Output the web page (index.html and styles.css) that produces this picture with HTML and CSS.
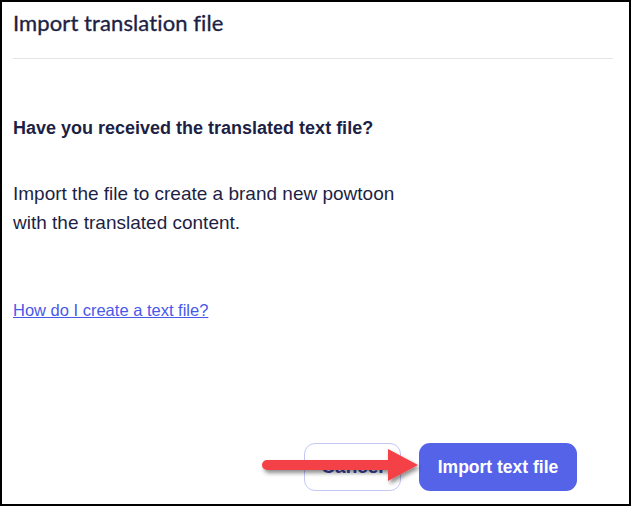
FILE: index.html
```html
<!DOCTYPE html>
<html>
<head>
<meta charset="utf-8">
<link rel="stylesheet" href="styles.css">
</head>
<body>
<div class="dialog">
  <div class="header">
    <h1 class="title">Import translation file</h1>
  </div>
  <div class="content">
    <h2 class="question">Have you received the translated text file?</h2>
    <p class="desc">Import the file to create a brand new powtoon<br>with the translated content.</p>
    <a class="help" href="#">How do I create a text file?</a>
  </div>
  <div class="footer">
    <button class="btn btn-cancel">Cancel</button>
    <button class="btn btn-primary">Import text file</button>
    <svg class="arrow" width="170" height="44" viewBox="0 0 170 44">
      <defs>
        <filter id="sh" x="-10%" y="-30%" width="130%" height="170%">
          <feDropShadow dx="2" dy="3" stdDeviation="2" flood-color="#000" flood-opacity="0.45"/>
        </filter>
      </defs>
      <path d="M13 16 L134 16 L134 5 L164 21 L134 37 L134 26 L13 26 A5 5 0 0 1 13 16 Z" fill="#f44146" filter="url(#sh)"/>
    </svg>
  </div>
</div>
</body>
</html>
```
FILE: styles.css
```css
html, body {
  margin: 0;
  padding: 0;
  background: #fff;
}
.dialog {
  position: relative;
  width: 631px;
  height: 506px;
  box-sizing: border-box;
  border: 2px solid #000;
  padding: 0 16px 0 11px;
  display: flex;
  flex-direction: column;
  font-family: "Lato", "Open Sans", sans-serif;
  color: #1d1f45;
}
.header {
  height: 57px;
  border-bottom: 1px solid #e3e3e8;
  box-sizing: border-box;
  padding-top: 8px;
}
.title {
  margin: 0;
  font-size: 22px;
  font-weight: 400;
  line-height: 26px;
  letter-spacing: 0.1px;
  color: #1d1f45;
  -webkit-text-stroke: 0.35px #1d1f45;
}
.content {
  flex: 1;
  padding-top: 59px;
  font-family: "Liberation Sans", Arial, sans-serif;
}
.question {
  margin: 0;
  font-family: "Liberation Sans", Arial, sans-serif;
  font-size: 18px;
  font-weight: 700;
  line-height: 20px;
}
.desc {
  margin: 41px 0 0 0;
  font-family: "Liberation Sans", Arial, sans-serif;
  font-size: 19px;
  line-height: 29px;
}
.help {
  display: inline-block;
  margin-top: 64px;
  font-family: "Liberation Sans", Arial, sans-serif;
  font-size: 16.5px;
  line-height: 18px;
  color: #4859ea;
}
.footer {
  position: relative;
  display: flex;
  justify-content: flex-end;
  gap: 18px;
  padding: 0 36px 13px 0;
}
.btn {
  height: 48px;
  border-radius: 11px;
  font-family: "Liberation Sans", Arial, sans-serif;
  font-size: 17.5px;
  font-weight: 700;
  cursor: pointer;
}
.btn-cancel {
  width: 97px;
  background: #fff;
  border: 1px solid #c4c8f7;
  color: #3b3fa8;
  font-size: 19px;
}
.btn-primary {
  width: 158px;
  background: #5563e9;
  border: none;
  color: #fff;
}
.arrow {
  position: absolute;
  left: 241px;
  top: 1px;
}
```
